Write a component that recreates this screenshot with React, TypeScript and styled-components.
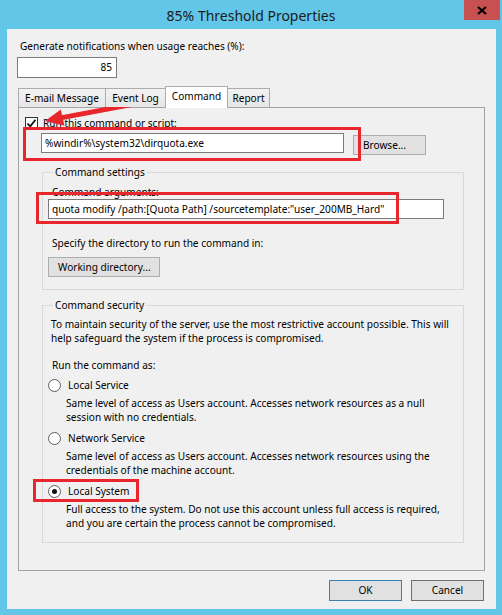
import styled, { createGlobalStyle } from 'styled-components';

const uiFont = `"Noto Sans", "Open Sans", "DejaVu Sans", sans-serif`;
const red = '#e8262b';

const GlobalStyle = createGlobalStyle`
  html, body {
    margin: 0;
    padding: 0;
  }
  body {
    width: 502px;
    height: 615px;
    overflow: hidden;
    background: #62c6e9;
    font-family: ${uiFont};
    font-size: 10.1px;
    color: #000;
  }
  * {
    box-sizing: border-box;
  }
`;

const CheckMark = () => (
  <svg width="11" height="11" viewBox="0 0 11 11">
    <path d="M1.5 5.5 L4.2 8.3 L9.5 1.8" fill="none" stroke="#111" strokeWidth="1.8" />
  </svg>
);

const CloseGlyph = () => (
  <svg width="10" height="9" viewBox="0 0 10 9">
    <path d="M1 1 L9 8 M9 1 L1 8" stroke="#000" strokeWidth="2.2" />
  </svg>
);

const RedArrow = () => (
  <ArrowLayer width="502" height="615" viewBox="0 0 502 615">
    <line x1="193" y1="93" x2="62" y2="117.6" stroke={red} strokeWidth="5" />
    <polygon points="45,121 64.5,125.8 60.8,109.5" fill={red} />
  </ArrowLayer>
);

const tabs = [
  { label: 'E-mail Message', width: 88 },
  { label: 'Event Log', width: 61 },
  { label: 'Command', width: 63, active: true },
  { label: 'Report', width: 43 },
];

const accounts = [
  {
    name: 'Local Service',
    desc: 'Same level of access as Users account. Accesses network resources as a null session with no credentials.',
    selected: false,
  },
  {
    name: 'Network Service',
    desc: 'Same level of access as Users account. Accesses network resources using the credentials of the machine account.',
    selected: false,
  },
  {
    name: 'Local System',
    desc: 'Full access to the system. Do not use this account unless full access is required, and you are certain the process cannot be compromised.',
    selected: true,
  },
];

const App = () => {
  return (
    <Window>
      <GlobalStyle />
      <TitleBar>
        <span />
        <Title>85% Threshold Properties</Title>
        <CloseButton>
          <CloseGlyph />
        </CloseButton>
      </TitleBar>

      <Client>
        <Label>Generate notifications when usage reaches (%):</Label>
        <PercentInput>85</PercentInput>

        <TabStrip>
          {tabs.map((tab) => (
            <Tab key={tab.label} $active={tab.active} $width={tab.width}>
              {tab.label}
            </Tab>
          ))}
        </TabStrip>

        <TabPage>
          <CheckRow>
            <CheckBox>
              <CheckMark />
            </CheckBox>
            <span>Run this command or script:</span>
          </CheckRow>

          <CommandRow>
            <TextBox $width={303}>%windir%\system32\dirquota.exe</TextBox>
            <PushButton $width={73} $offset={2}>
              Browse...
            </PushButton>
            <Highlight $left={-18} $top={-6} $width={338} $height={34} />
          </CommandRow>

          <Group>
            <Legend>Command settings</Legend>
            <FieldLabel>Command arguments:</FieldLabel>
            <ArgsRow>
              <TextBox $width={396}>
                quota modify /path:[Quota Path] /sourcetemplate:"user_200MB_Hard"
              </TextBox>
              <Highlight $left={-12} $top={-7} $width={363} $height={32} />
            </ArgsRow>
            <FieldLabel $gap={17}>Specify the directory to run the command in:</FieldLabel>
            <PushButton $width={112} $offset={7}>
              Working directory...
            </PushButton>
          </Group>

          <Group $gap={8}>
            <Legend>Command security</Legend>
            <Paragraph>
              To maintain security of the server, use the most restrictive account possible. This will
              help safeguard the system if the process is compromised.
            </Paragraph>
            <FieldLabel $gap={13}>Run the command as:</FieldLabel>
            {accounts.map((account, index) => (
              <Account key={account.name} $first={index === 0}>
                <RadioRow>
                  <Radio $checked={account.selected} />
                  <span>{account.name}</span>
                  {account.selected && (
                    <Highlight $left={-15} $top={-5} $width={106} $height={23} />
                  )}
                </RadioRow>
                <Description>{account.desc}</Description>
              </Account>
            ))}
          </Group>
        </TabPage>

        <Footer>
          <DialogButton $default>OK</DialogButton>
          <DialogButton>Cancel</DialogButton>
        </Footer>
      </Client>

      <RedArrow />
    </Window>
  );
};

const Window = styled.div`
  position: relative;
  width: 502px;
  height: 615px;
  display: flex;
  flex-direction: column;
`;

const TitleBar = styled.div`
  height: 29px;
  display: grid;
  grid-template-columns: 1fr auto 1fr;
  align-items: center;
`;

const Title = styled.div`
  font-size: 14px;
  color: #1b1b1b;
  padding-top: 1px;
`;

const CloseButton = styled.div`
  justify-self: end;
  align-self: start;
  width: 36px;
  height: 20px;
  margin-right: 2px;
  background: #c75050;
  display: flex;
  align-items: center;
  justify-content: center;
`;

const Client = styled.div`
  flex: 1;
  margin: 0 6px 6px 7px;
  padding: 10px 12px 8px 10px;
  background: #f0f0f0;
  display: flex;
  flex-direction: column;
`;

const Label = styled.div`
  margin-left: 3px;
  line-height: 14px;
`;

const PercentInput = styled.div`
  width: 100px;
  height: 21px;
  margin-top: 4px;
  padding: 0 4px;
  border: 1px solid #7a7a7a;
  background: #fff;
  text-align: right;
  line-height: 19px;
`;

const TabStrip = styled.div`
  margin: 8px 0 0 1px;
  height: 21px;
  display: flex;
  align-items: flex-end;
  position: relative;
  z-index: 1;
`;

const Tab = styled.div<{ $active?: boolean; $width: number }>`
  width: ${(p) => p.$width}px;
  height: ${(p) => (p.$active ? 22 : 19)}px;
  margin-bottom: ${(p) => (p.$active ? -1 : 0)}px;
  margin-right: -1px;
  border: 1px solid #acacac;
  border-bottom: none;
  background: ${(p) => (p.$active ? '#fff' : 'linear-gradient(#f2f2f2, #e6e6e6)')};
  text-align: center;
  line-height: 18px;
  white-space: nowrap;
`;

const TabPage = styled.div`
  margin-left: 1px;
  width: 467px;
  height: 464px;
  border: 1px solid #a3a3a3;
  background: #f0f0f0;
  padding: 8px 6px 0;
`;

const CheckRow = styled.div`
  display: flex;
  align-items: center;
  gap: 5px;
  height: 14px;
`;

const CheckBox = styled.div`
  width: 13px;
  height: 13px;
  border: 1px solid #333;
  background: #fff;
  display: flex;
  align-items: center;
  justify-content: center;
`;

const CommandRow = styled.div`
  position: relative;
  margin: 3px 0 0 16px;
  display: flex;
  align-items: flex-start;
  gap: 9px;
`;

const ArgsRow = styled.div`
  position: relative;
`;

const TextBox = styled.div<{ $width: number }>`
  width: ${(p) => p.$width}px;
  height: 20px;
  padding: 0 3px;
  border: 1px solid #7a7a7a;
  background: #fff;
  line-height: 18px;
  white-space: nowrap;
  overflow: hidden;
`;

const PushButton = styled.div<{ $width: number; $offset: number }>`
  width: ${(p) => p.$width}px;
  height: 20px;
  margin-top: ${(p) => p.$offset}px;
  padding-left: 9px;
  border: 1px solid #adadad;
  background: #e1e1e1;
  line-height: 18px;
  white-space: nowrap;
`;

const Highlight = styled.div<{ $left: number; $top: number; $width: number; $height: number }>`
  position: absolute;
  left: ${(p) => p.$left}px;
  top: ${(p) => p.$top}px;
  width: ${(p) => p.$width}px;
  height: ${(p) => p.$height}px;
  border: 3px solid ${red};
  pointer-events: none;
`;

const Group = styled.fieldset<{ $gap?: number }>`
  width: 422px;
  margin: ${(p) => p.$gap ?? 10}px 0 0 17px;
  padding: 6px 5px 12px;
  border: 1px solid #d9d9d9;
  min-inline-size: 0;
`;

const Legend = styled.legend`
  margin-left: 5px;
  padding: 0 2px;
  line-height: 14px;
`;

const FieldLabel = styled.div<{ $gap?: number }>`
  margin: ${(p) => p.$gap ?? 0}px 0 0 4px;
  line-height: 14px;
`;

const Paragraph = styled.div`
  margin-left: 3px;
  line-height: 13.5px;
`;

const Account = styled.div<{ $first: boolean }>`
  margin-top: ${(p) => (p.$first ? 6 : 7)}px;
`;

const RadioRow = styled.div`
  position: relative;
  display: flex;
  align-items: center;
  gap: 7px;
  height: 14px;
`;

const Radio = styled.div<{ $checked: boolean }>`
  width: 13px;
  height: 13px;
  border-radius: 50%;
  border: 1px solid #5e5e5e;
  background: #fff;
  display: flex;
  align-items: center;
  justify-content: center;

  &::after {
    content: '';
    width: 5px;
    height: 5px;
    border-radius: 50%;
    background: ${(p) => (p.$checked ? '#111' : 'transparent')};
  }
`;

const Description = styled.div`
  margin: 4px 0 0 18px;
  line-height: 14px;
`;

const Footer = styled.div`
  margin-top: 9px;
  display: flex;
  justify-content: flex-end;
  gap: 9px;
`;

const DialogButton = styled.div<{ $default?: boolean }>`
  width: 73px;
  height: 21px;
  border: 1px solid ${(p) => (p.$default ? '#3c7fb1' : '#707070')};
  background: #e1e1e1;
  text-align: center;
  line-height: 19px;
`;

const ArrowLayer = styled.svg`
  position: absolute;
  left: 0;
  top: 0;
  pointer-events: none;
`;

export default App;
